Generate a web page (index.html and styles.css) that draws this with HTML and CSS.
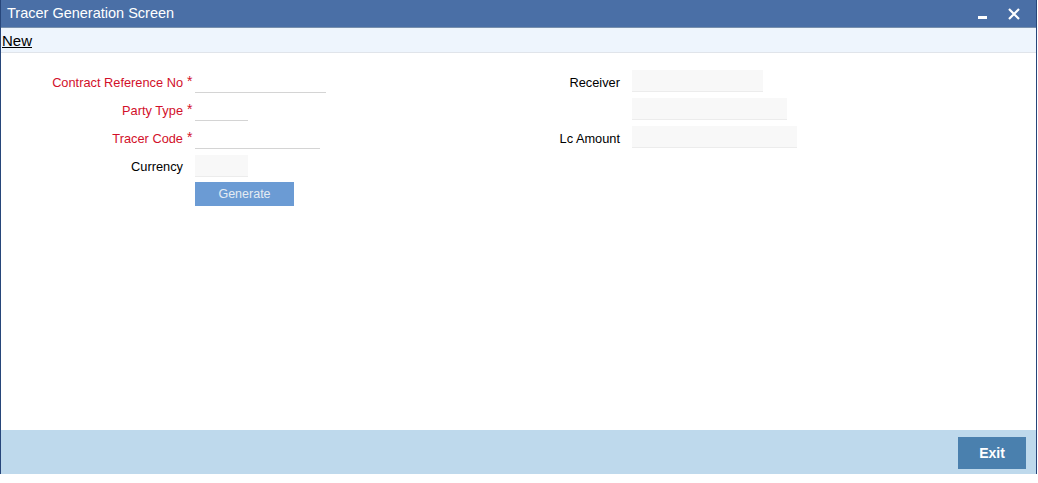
FILE: index.html
```html
<!DOCTYPE html>
<html lang="en">
<head>
  <meta charset="UTF-8">
  <title>Tracer Generation Screen</title>
  <link rel="stylesheet" href="styles.css">
</head>
<body>
  <div class="window">
    <div class="titlebar">
      <span class="title">Tracer Generation Screen</span>
      <div class="win-buttons">
        <span class="min"></span>
        <svg class="close" width="12" height="12" viewBox="0 0 12 12">
          <path d="M1 1 L11 11 M11 1 L1 11" stroke="#fff" stroke-width="2.2"/>
        </svg>
      </div>
    </div>

    <div class="toolbar"><a href="#">New</a></div>

    <div class="content">
      <div class="form-col left">
        <div class="row">
          <label class="req">Contract Reference No</label><span class="star">*</span>
          <span class="field line w131"></span>
        </div>
        <div class="row">
          <label class="req">Party Type</label><span class="star">*</span>
          <span class="field line w53"></span>
        </div>
        <div class="row">
          <label class="req">Tracer Code</label><span class="star">*</span>
          <span class="field line w125"></span>
        </div>
        <div class="row">
          <label>Currency</label><span class="star"></span>
          <span class="field box w53"></span>
        </div>
        <div class="row btn-row">
          <span></span><span></span>
          <button class="generate">Generate</button>
        </div>
      </div>

      <div class="form-col right">
        <div class="row">
          <label>Receiver</label><span class="star"></span>
          <span class="field box w131"></span>
        </div>
        <div class="row">
          <label></label><span class="star"></span>
          <span class="field box w155"></span>
        </div>
        <div class="row">
          <label>Lc Amount</label><span class="star"></span>
          <span class="field box w165"></span>
        </div>
      </div>
    </div>

    <div class="footer">
      <button class="exit">Exit</button>
    </div>
  </div>
</body>
</html>
```

FILE: styles.css
```css
body {
  margin: 0;
  background: #fff;
  font-family: Arial, "Liberation Sans", sans-serif;
}

.window {
  width: 1035px;
  height: 474px;
  display: flex;
  flex-direction: column;
  border-left: 1px solid #27467a;
  border-right: 1px solid #27467a;
}

.titlebar {
  height: 27px;
  background: #4a6fa6;
  border-bottom: 1px solid #7890ad;
  display: flex;
  align-items: center;
  justify-content: space-between;
  padding: 0 16px 0 6px;
}

.title {
  color: #fff;
  font-size: 14.5px;
  margin-top: -1px;
}

.win-buttons {
  display: flex;
  align-items: flex-start;
  gap: 21px;
  height: 18px;
}

.min {
  width: 9px;
  height: 3px;
  background: #fff;
  margin-top: 11px;
}

.close {
  margin-top: 3px;
}

.toolbar {
  height: 24px;
  background: #eef5fd;
  border-bottom: 1px solid #e0e4ea;
  display: flex;
  align-items: center;
}

.toolbar a {
  color: #000;
  font-size: 15px;
  text-decoration: underline;
  margin-left: 1px;
}

.content {
  flex: 1;
  display: flex;
  padding-top: 18px;
}

.form-col {
  display: flex;
  flex-direction: column;
}

.form-col.left {
  width: 437px;
}

.form-col.right {
  margin-top: -1px;
}

.row {
  display: grid;
  grid-template-columns: 182px 12px auto;
  height: 28px;
  align-items: start;
}

.row label {
  font-size: 12.8px;
  color: #000;
  text-align: right;
  padding-top: 4px;
}

.right .row label {
  padding-top: 5px;
}

.row label.req {
  color: #d2102a;
}

.star {
  color: #d2102a;
  font-size: 14px;
  padding-left: 4px;
  line-height: 14px;
  padding-top: 3px;
}

.field {
  display: block;
  height: 21px;
  border-bottom: 1px solid #d4d4d4;
}

.field.box {
  background: #f8f8f8;
  border-bottom-color: #ececec;
}

.w53 { width: 53px; }
.w125 { width: 125px; }
.w131 { width: 131px; }
.w155 { width: 155px; }
.w165 { width: 165px; }

.btn-row {
  margin-top: -1px;
}

.generate {
  width: 99px;
  height: 24px;
  border: none;
  background: #6b9bd4;
  color: #e4ebf3;
  font-family: Arial, "Liberation Sans", sans-serif;
  font-size: 12.5px;
  padding: 0;
}

.footer {
  height: 44px;
  background: #bed9ec;
  display: flex;
  justify-content: flex-end;
  align-items: center;
  padding-right: 10px;
}

.exit {
  width: 68px;
  height: 32px;
  border: none;
  background: #4a80ae;
  color: #fff;
  font-family: Arial, "Liberation Sans", sans-serif;
  font-size: 14px;
  font-weight: bold;
  margin-top: 1px;
}
```
